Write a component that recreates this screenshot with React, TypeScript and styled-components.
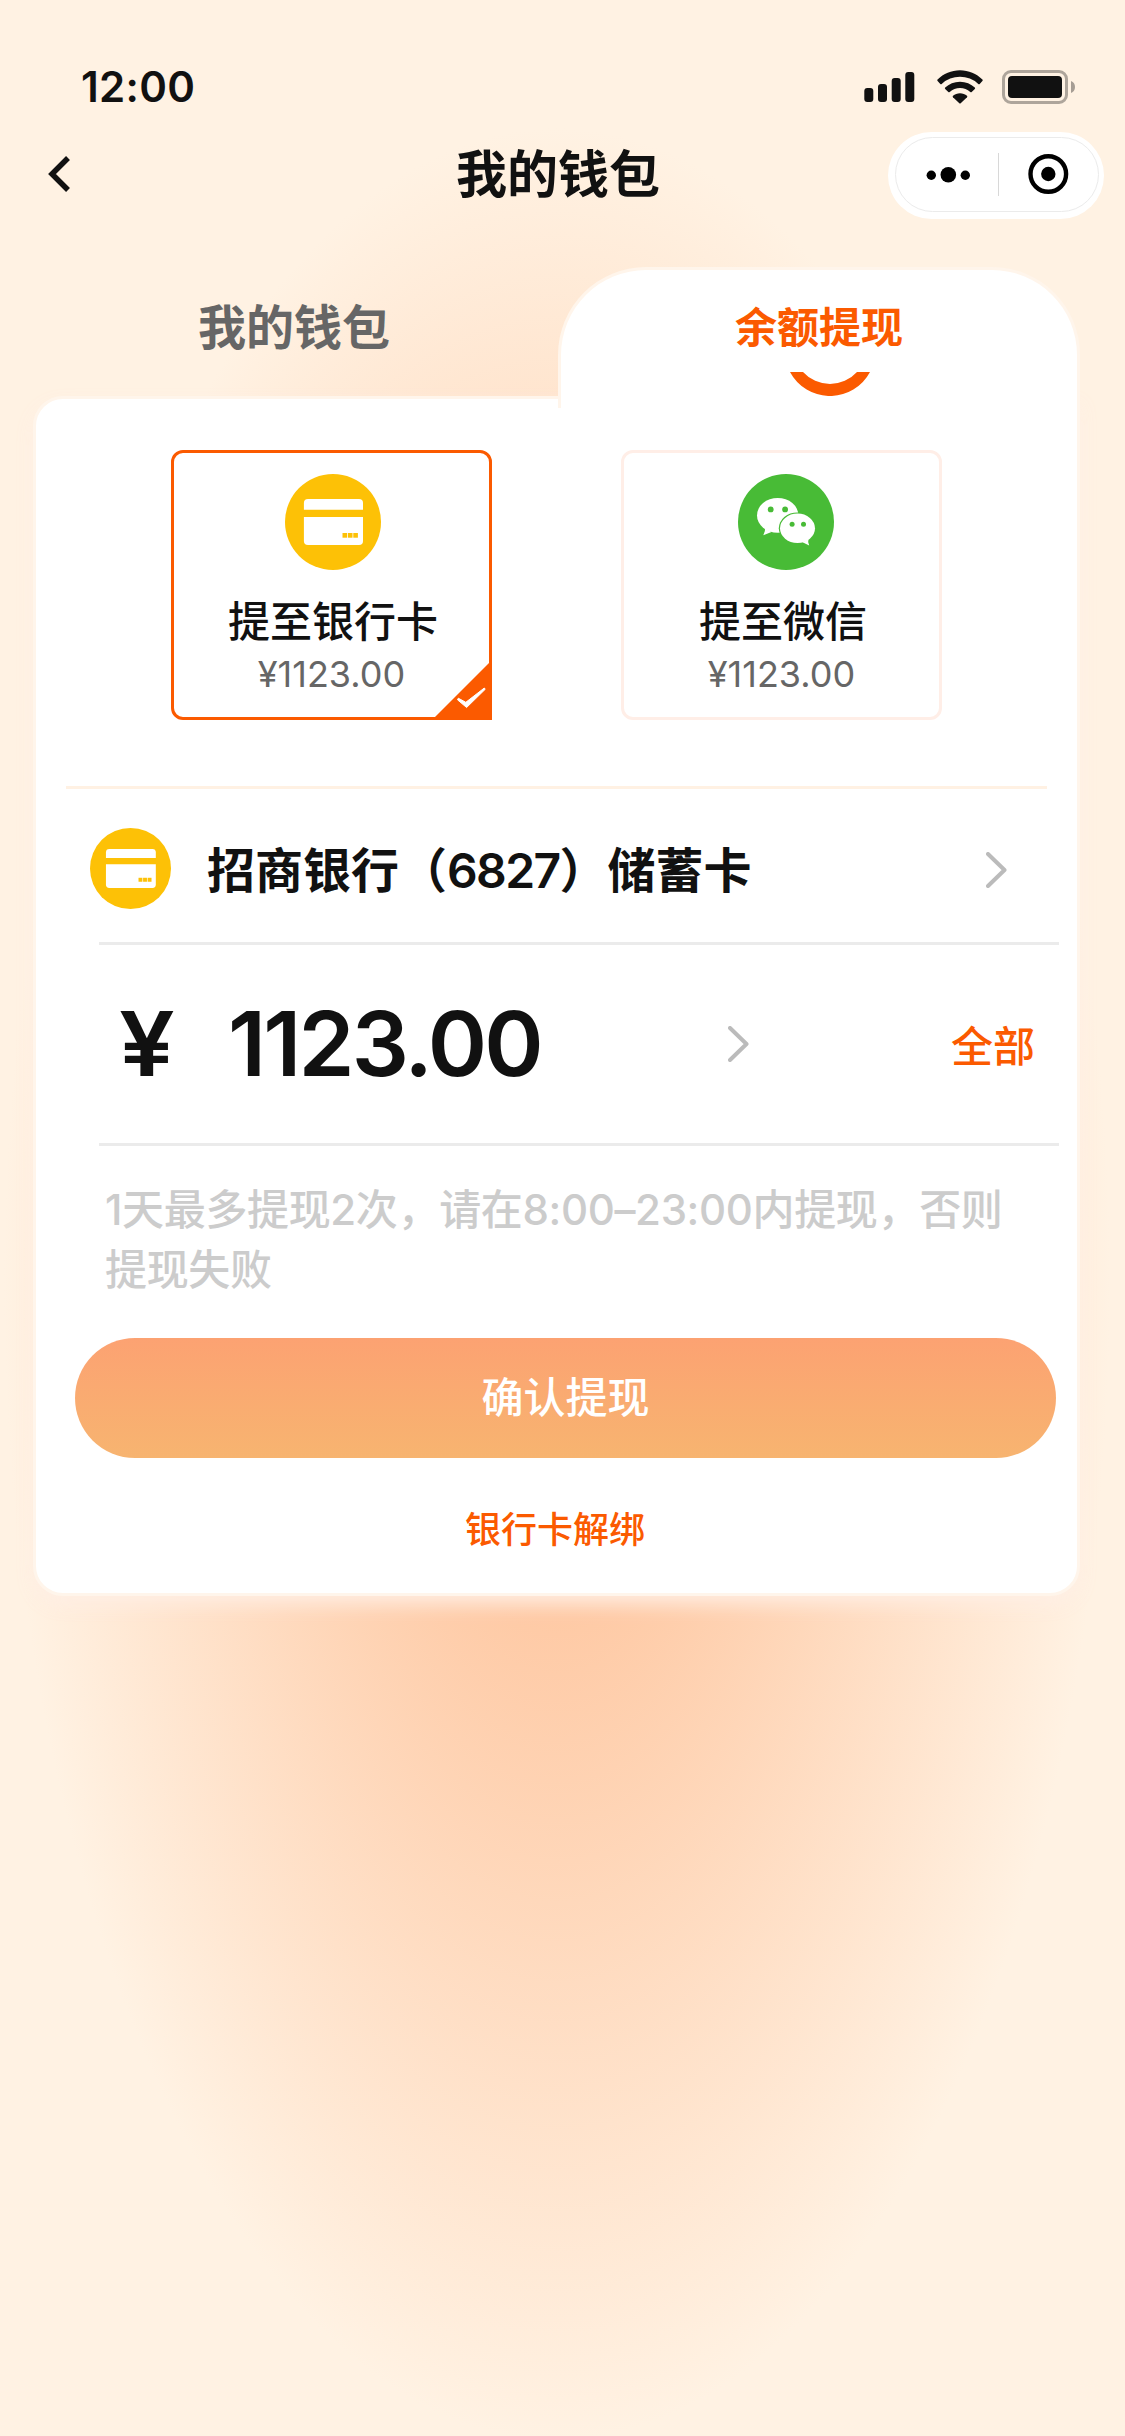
import React from "react";
import styled, { createGlobalStyle } from "styled-components";

const ORANGE = "#fb5a00";
const INK = "#111111";

const GlobalStyle = createGlobalStyle`
  * { box-sizing: border-box; }
  body {
    margin: 0;
    background: #fff2e3;
    font-family: Inter, "Noto Sans CJK SC", sans-serif;
    color: ${INK};
  }
  svg { display: block; flex: none; }
`;

const Page = styled.div`
  width: 1125px;
  height: 2436px;
  overflow: hidden;
  background: radial-gradient(553px 1156px at 557px 1284px, #feba8d, #fff2e3) #fff2e3;
`;

const StatusBar = styled.header`
  display: flex;
  justify-content: space-between;
  align-items: center;
  height: 114px;
  padding: 60px 50px 0 81px;
`;

const Clock = styled.div`
  font-size: 42px;
  line-height: 54px;
  font-weight: 600;
  letter-spacing: 0.3px;
`;

const StatusIcons = styled.div`
  display: flex;
  align-items: center;
`;

const NavBar = styled.nav`
  display: grid;
  grid-template-columns: 236px 1fr 216px;
  align-items: center;
  height: 87px;
  margin-top: 18px;
  padding: 0 21px 0 48px;
`;

const BackButton = styled.button`
  border: 0;
  padding: 0 0 3px;
  background: none;
  width: 60px;
`;

const Title = styled.h1`
  margin: 0;
  padding: 0 56px 2px 0;
  text-align: center;
  font-size: 51px;
  line-height: 84px;
  font-weight: 700;
`;

const Capsule = styled.div`
  height: 87px;
  padding: 5px 5px 7px 7px;
  border-radius: 44px;
  background: #fff;
`;

const CapsuleInner = styled.div`
  display: flex;
  align-items: center;
  height: 75px;
  border: 1px solid #ebebeb;
  border-radius: 38px;
`;

const CapsuleDivider = styled.i`
  width: 1px;
  height: 43px;
  background: #d8d8d8;
`;

const Tabs = styled.div`
  display: flex;
  height: 129px;
  margin: 48px 45px 0 33px;
`;

const Tab = styled.div`
  width: 525px;
  padding: 31px 0 0 165px;
  font-size: 48px;
  line-height: 60px;
  font-weight: 700;
  color: #666;
`;

const ActiveTab = styled.div`
  position: relative;
  z-index: 1;
  display: flex;
  flex-direction: column;
  align-items: center;
  width: 522px;
  height: 141px;
  padding-top: 28px;
  border: 3px solid #fff5eb;
  border-bottom: 0;
  border-radius: 88px 88px 0 0;
  background: #fff;
  font-size: 42px;
  line-height: 60px;
  font-weight: 700;
  color: ${ORANGE};
  svg { margin: 14px 0 0 21px; }
`;

const Card = styled.main`
  width: 1047px;
  height: 1200px;
  margin-left: 33px;
  padding-top: 51px;
  border: 3px solid #fff5eb;
  border-radius: 30px 0 30px 30px;
  background: #fff;
  box-shadow: 0 9px 18px rgba(255, 238, 228, 0.9);
`;

const Options = styled.div`
  display: flex;
  gap: 129px;
  padding-left: 135px;
`;

const Option = styled.div<{ $active?: boolean }>`
  position: relative;
  display: flex;
  flex-direction: column;
  align-items: center;
  width: 321px;
  height: 270px;
  padding-top: 21px;
  border: 3px solid ${(p) => (p.$active ? ORANGE : "#ffeee7")};
  border-radius: ${(p) => (p.$active ? "12px 12px 0 12px" : "12px")};
`;

const OptionIcon = styled.div<{ $shift: number }>`
  margin-left: ${(p) => p.$shift}px;
`;

const OptionLabel = styled.div`
  margin-top: 22px;
  padding-left: 3px;
  font-size: 42px;
  line-height: 60px;
  font-weight: 500;
`;

const OptionAmount = styled.div`
  margin-top: -2px;
  font-size: 36px;
  line-height: 48px;
  color: #666;
`;

const Corner = styled.svg`
  position: absolute;
  right: -3px;
  bottom: -3px;
`;

const Divider = styled.div<{ $warm?: boolean }>`
  height: 3px;
  margin: ${(p) => (p.$warm ? "66px 30px 0" : "0 18px 0 63px")};
  background: ${(p) => (p.$warm ? "#fff1e3" : "#ebebeb")};
`;

const BankRow = styled.div`
  display: flex;
  align-items: center;
  height: 153px;
  padding: 6px 70px 0 54px;
  > svg:last-child { margin-top: 3px; }
`;

const BankName = styled.div`
  flex: 1;
  padding: 5px 0 0 36px;
  font-size: 48px;
  line-height: 66px;
  font-weight: 700;
  white-space: nowrap;
`;

const Digits = styled.span`
  font-weight: 600;
  letter-spacing: -1.6px;
`;

const AmountRow = styled.div`
  display: flex;
  align-items: center;
  height: 198px;
  padding: 0 42px 0 83px;
  font-size: 90px;
  line-height: 108px;
  font-weight: 600;
`;

const Currency = styled.span`
  width: 109px;
  transform: scaleX(1.1);
  transform-origin: left center;
`;

const AmountValue = styled.span`
  width: 500px;
  letter-spacing: -2.8px;
`;

const AllLink = styled.a`
  margin-left: auto;
  padding-top: 6px;
  font-size: 42px;
  line-height: 60px;
  font-weight: 500;
  color: ${ORANGE};
`;

const Hint = styled.p`
  width: 930px;
  margin: 34px 0 0 69px;
  font-size: 42px;
  line-height: 60px;
  font-weight: 500;
  letter-spacing: -0.35px;
  color: #ccc;
`;

const Submit = styled.button`
  display: block;
  width: 981px;
  height: 120px;
  margin: 38px 0 0 39px;
  padding: 0;
  border: 0;
  border-radius: 60px;
  background: linear-gradient(#fca272, #f7b470);
  font: 500 42px/60px Inter, "Noto Sans CJK SC", sans-serif;
  color: #fff;
`;

const Unbind = styled.a`
  display: block;
  margin-top: 48px;
  padding-right: 3px;
  text-align: center;
  font-size: 36px;
  line-height: 48px;
  font-weight: 500;
  color: ${ORANGE};
`;

const SignalIcon = () => (
  <svg width="51" height="32" viewBox="0 0 51 32" fill={INK}>
    <rect x="0.3" y="17" width="9" height="14" rx="3" />
    <rect x="14" y="13" width="9" height="18" rx="3" />
    <rect x="27.700" y="7" width="9" height="24" rx="3" />
    <rect x="41.300" y="1" width="9" height="30" rx="3" />
  </svg>
);

const WifiIcon = () => (
  <svg width="46" height="34" viewBox="1 0 46 34" fill={INK} style={{ marginLeft: 22 }}>
    <path d="M24 .3C32.700 .3 40.500 3.800 46.400 9.500Q47.100 10.200 46.400 10.900L43.700 13.900Q43 14.500 42.300 13.900A27 27 0 0 0 5.700 13.900Q5 14.500 4.300 13.900L1.600 10.900Q.9 10.200 1.600 9.500C7.500 3.800 15.300 .3 24 .3Z" />
    <path d="M24 11.700C29.800 11.700 35 13.900 38.800 17.600Q39.500 18.300 38.800 19L35.700 22Q35 22.600 34.300 22A15.600 15.600 0 0 0 13.700 22Q13 22.600 12.300 22L9.200 19Q8.500 18.300 9.200 17.600C13 13.900 18.200 11.700 24 11.700Z" />
    <path d="M24 23.300C26.700 23.300 29.100 24.200 31 25.800Q31.700 26.400 31 27.200L24.700 33.300Q24 33.900 23.300 33.300L17 27.200Q16.300 26.400 17 25.800C18.900 24.200 21.300 23.300 24 23.300Z" />
  </svg>
);

const BatteryIcon = () => (
  <svg width="73" height="34" viewBox="0 0 73 34" style={{ marginLeft: 19 }}>
    <rect x="1.500" y="1.500" width="63" height="31" rx="7.500" fill="none" stroke="#aea59b" strokeWidth="3" />
    <rect x="6" y="6" width="54" height="22" rx="4" fill={INK} />
    <path d="M69 11C71.600 12 73 14.300 73 17S71.600 22 69 23Z" fill="#a69d94" />
  </svg>
);

const BankCardIcon = ({ size }: { size: number }) => (
  <svg width={size} height={size} viewBox="0 0 96 96">
    <circle cx="48" cy="48" r="48" fill="#fdc106" />
    <path d="M23 25H74Q78 25 78 29V35.700H18.900V29Q18.900 25 23 25Z" fill="#fff" />
    <path d="M18.900 43H78V67Q78 71 74 71H23Q18.900 71 18.900 67Z" fill="#fff" />
    <g fill="#fdc106">
      <rect x="57.500" y="59" width="4.600" height="4.700" />
      <rect x="62.900" y="59" width="4.600" height="4.700" />
      <rect x="68.300" y="59" width="4.600" height="4.700" />
    </g>
  </svg>
);

const WechatIcon = () => (
  <svg width="96" height="96" viewBox="0 0 96 96">
    <circle cx="48" cy="48" r="48" fill="#48bb36" />
    <ellipse cx="39.700" cy="41.400" rx="20.700" ry="17.400" fill="#fff" />
    <path d="M27 54Q27.600 57 25.300 61.300L33.500 58Z" fill="#fff" />
    <ellipse cx="59.500" cy="54.300" rx="18.700" ry="15.900" fill="#48bb36" />
    <ellipse cx="59.500" cy="54.300" rx="17.500" ry="14.700" fill="#fff" />
    <path d="M64.500 68.200L71.200 71.400Q69.400 68.500 70.500 65.500Z" fill="#fff" />
    <g fill="#48bb36">
      <circle cx="32.700" cy="35.400" r="2.900" />
      <circle cx="47.100" cy="35.400" r="2.900" />
      <circle cx="54.100" cy="50.300" r="2.500" />
      <circle cx="65.500" cy="50.300" r="2.500" />
    </g>
  </svg>
);

const Chevron = () => (
  <svg width="21" height="36" viewBox="0 0 21 36">
    <path d="M2 2L18.500 18L2 34" fill="none" stroke="#bbb" strokeWidth="4" strokeLinecap="round" strokeLinejoin="round" />
  </svg>
);

export default function App() {
  return (
    <Page>
      <GlobalStyle />
      <StatusBar>
        <Clock>12:00</Clock>
        <StatusIcons>
          <SignalIcon />
          <WifiIcon />
          <BatteryIcon />
        </StatusIcons>
      </StatusBar>

      <NavBar>
        <BackButton aria-label="返回">
          <svg width="24" height="38" viewBox="0 0 24 38">
            <path d="M20 3L4 19L20 35" fill="none" stroke={INK} strokeWidth="5.500" />
          </svg>
        </BackButton>
        <Title>我的钱包</Title>
        <Capsule>
          <CapsuleInner>
            <svg width="102" height="43" viewBox="0 0 102 43">
              <circle cx="35.300" cy="22.300" r="4.700" />
              <circle cx="52.300" cy="21.700" r="7.800" />
              <circle cx="69.300" cy="22.300" r="4.700" />
            </svg>
            <CapsuleDivider />
            <svg width="98" height="43" viewBox="0 0 98 43">
              <circle cx="49.300" cy="21" r="17.800" fill="none" stroke="#000" strokeWidth="4.400" />
              <circle cx="49.300" cy="21" r="7.200" />
            </svg>
          </CapsuleInner>
        </Capsule>
      </NavBar>

      <Tabs>
        <Tab>我的钱包</Tab>
        <ActiveTab>
          余额提现
          <svg width="80" height="24" viewBox="0 0 80 24">
            <path d="M0 0A45.300 45.300 0 0 0 80 0H67A36.400 36.400 0 0 1 13 0Z" fill={ORANGE} />
          </svg>
        </ActiveTab>
      </Tabs>

      <Card>
        <Options>
          <Option $active>
            <OptionIcon $shift={3}>
              <BankCardIcon size={96} />
            </OptionIcon>
            <OptionLabel>提至银行卡</OptionLabel>
            <OptionAmount>¥1123.00</OptionAmount>
            <Corner width="57" height="58" viewBox="0 0 57 58">
              <path d="M57 0V58H0V55L54 1Z" fill={ORANGE} />
              <path d="M23.300 36.200L30.800 40.300L49.300 26L50.200 27.300L31.600 45.500L22.500 37.800Z" fill="#fff" stroke="#fff" strokeLinejoin="round" />
            </Corner>
          </Option>
          <Option>
            <OptionIcon $shift={9}>
              <WechatIcon />
            </OptionIcon>
            <OptionLabel>提至微信</OptionLabel>
            <OptionAmount>¥1123.00</OptionAmount>
          </Option>
        </Options>

        <Divider $warm />
        <BankRow>
          <BankCardIcon size={81} />
          <BankName>
            招商银行（<Digits>6827</Digits>）储蓄卡
          </BankName>
          <Chevron />
        </BankRow>
        <Divider />
        <AmountRow>
          <Currency>¥</Currency>
          <AmountValue>1123.00</AmountValue>
          <Chevron />
          <AllLink>全部</AllLink>
        </AmountRow>
        <Divider />
        <Hint>1天最多提现2次，请在8:00–23:00内提现，否则提现失败</Hint>
        <Submit>确认提现</Submit>
        <Unbind>银行卡解绑</Unbind>
      </Card>
    </Page>
  );
}
